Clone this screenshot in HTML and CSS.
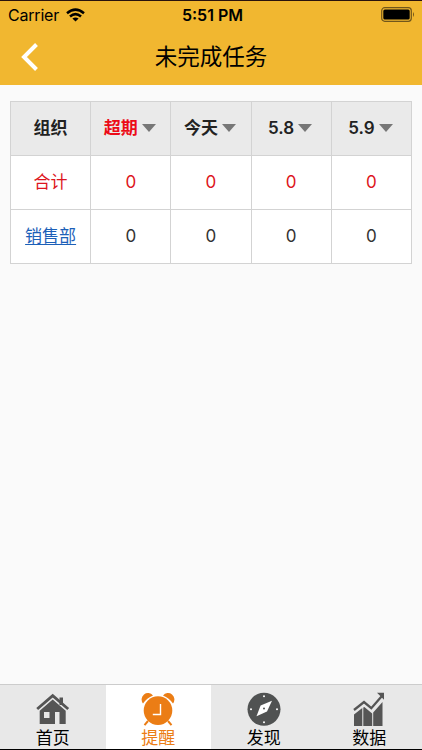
FILE: index.html
```html
<!DOCTYPE html>
<html lang="zh-CN">
<head>
    <meta charset="UTF-8">
    <meta name="viewport" content="width=device-width, initial-scale=1.0">
    <title>未完成任务</title>
    <link rel="stylesheet" href="styles.css">
</head>
<body>
    <!-- header -->
    <header class="header">
        <div class="status-bar">
            <div class="carrier">
                <span>Carrier</span>
                <svg class="wifi" width="19" height="14" viewBox="0 0 19 14">
                    <g fill="none" stroke="#000" stroke-width="2.5">
                        <path d="M1 5.2 Q9.5 -2 18 5.2"/>
                        <path d="M4 8.5 Q9.5 3.7 15 8.5"/>
                    </g>
                    <path d="M6.4 10.6 Q9.5 8.2 12.6 10.6 L9.5 13.6Z"/>
                </svg>
            </div>
            <div class="time">5:51 PM</div>
            <svg class="battery" width="34" height="15" viewBox="0 0 34 15">
                <rect x=".7" y=".7" width="29.6" height="13.6" rx="3" fill="none" stroke="#71561b" stroke-width="1.2"/>
                <rect x="2.3" y="2.4" width="26.4" height="10.2" rx="1.5"/>
                <path d="M32 5 Q34 7.5 32 10Z" fill="#71561b"/>
            </svg>
        </div>
        <div class="title-bar">
            <svg class="back" width="17" height="28" viewBox="0 0 17 28">
                <path d="M15.5 1.5 L3 14 L15.5 26.5" fill="none" stroke="#fff" stroke-width="4"/>
            </svg>
            <h1 class="title">未完成任务</h1>
        </div>
    </header>

    <!-- task table -->
    <main class="content">
        <table class="task-table">
            <thead>
                <tr>
                    <th>组织</th>
                    <th class="overdue">超期<span class="arrow"></span></th>
                    <th>今天<span class="arrow"></span></th>
                    <th>5.8<span class="arrow"></span></th>
                    <th>5.9<span class="arrow"></span></th>
                </tr>
            </thead>
            <tbody>
                <tr class="total">
                    <td>合计</td>
                    <td>0</td>
                    <td>0</td>
                    <td>0</td>
                    <td>0</td>
                </tr>
                <tr>
                    <td><a href="#">销售部</a></td>
                    <td>0</td>
                    <td>0</td>
                    <td>0</td>
                    <td>0</td>
                </tr>
            </tbody>
        </table>
    </main>

    <!-- bottom tabs -->
    <nav class="tabs">
        <a class="tab" href="#">
            <svg width="34" height="34" viewBox="0 0 34 34" fill="#555">
                <path d="M23.5 5.5 H27 V13 H23.5Z"/>
                <path d="M1.2 17 L16.7 3.6 L32.2 17" fill="none" stroke="#555" stroke-width="2.8"/>
                <path fill-rule="evenodd" d="M3.7 18.8 L16.7 7.4 L29.7 18.8 V32 H23.5 V20 H19 V32 H3.7Z M8 20 V26 H13.5 V20Z"/>
            </svg>
            <span>首页</span>
        </a>
        <a class="tab active" href="#">
            <svg width="34" height="34" viewBox="0 0 34 34" fill="#eb7d15">
                <path d="M2 11.4 A6.2 6.2 0 1 1 12 3.4 Q5.8 6 2 11.4Z"/>
                <path d="M32 11.4 A6.2 6.2 0 1 0 22 3.4 Q28.2 6 32 11.4Z"/>
                <circle cx="17" cy="18.6" r="14.3"/>
                <path d="M7 29 L3.5 33.2 M27 29 L30.5 33.2" stroke="#eb7d15" stroke-width="2"/>
                <path d="M19.5 12 V22.5 H11.8" fill="none" stroke="#fff" stroke-width="1.4"/>
            </svg>
            <span>提醒</span>
        </a>
        <a class="tab" href="#">
            <svg width="34" height="34" viewBox="0 0 34 34">
                <circle cx="17" cy="17.3" r="16.5" fill="#505252"/>
                <path d="M25 8.7 L20 19.6 L9.5 24.3 L13.6 13.4Z" fill="#fff"/>
                <g fill="#fff">
                    <circle cx="17" cy="4.3" r="1"/>
                    <circle cx="30" cy="17.3" r="1"/>
                    <circle cx="17" cy="30.3" r="1"/>
                    <circle cx="4" cy="17.3" r="1"/>
                </g>
                <circle cx="17" cy="16.6" r="1" fill="#505252"/>
            </svg>
            <span>发现</span>
        </a>
        <a class="tab" href="#">
            <svg width="34" height="34" viewBox="0 0 34 34" fill="#555">
                <path d="M2 22.5 L10.3 16 V34 H2Z M11.3 15.6 L12.3 15 L20.2 21.5 V34 H11.3Z M21.2 20.5 L30.5 10 V34 H21.2Z"/>
                <path d="M2 18 L12 10 L19.3 16.2 L29.5 4.5" fill="none" stroke="#555" stroke-width="2.3"/>
                <path d="M25 .8 H32 V7.8Z"/>
            </svg>
            <span>数据</span>
        </a>
    </nav>
</body>
</html>
```

FILE: styles.css
```css
* {
    box-sizing: border-box;
}
body {
    margin: 0;
    height: 750px;
    display: flex;
    flex-direction: column;
    background-color: #fafafa;
    border-top: 1px solid #29120c;
    border-bottom: 1px solid #000;
    font-family: Inter, "Noto Sans CJK SC", sans-serif;
    color: #000;
    overflow: hidden;
}

/* header */
.header {
    height: 84px;
    background-color: #f1b730;
}
.status-bar {
    display: grid;
    grid-template-columns: 1fr auto 1fr;
    align-items: center;
    height: 27px;
    padding: 0 7px 0 8px;
    font-size: 16px;
}
.carrier {
    display: flex;
    align-items: center;
    gap: 7px;
    letter-spacing: -0.2px;
}
.time {
    padding-left: 2px;
    font-weight: 600;
}
.battery {
    justify-self: end;
}
.title-bar {
    display: grid;
    grid-template-columns: 40px 1fr 40px;
    align-items: center;
    height: 57px;
    padding: 0 21px;
}
.title {
    margin: 0;
    font-size: 22.5px;
    font-weight: 400;
    line-height: 56px;
    text-align: center;
}

/* task table */
.content {
    flex: 1;
    padding: 16px 10px 0;
}
.task-table {
    width: 402px;
    table-layout: fixed;
    border-collapse: collapse;
    background-color: #fff;
    font-size: 17px;
    line-height: 24px;
    color: #333;
}
.task-table th,
.task-table td {
    height: 54px;
    padding: 0 0 2px;
    border: 1px solid #d3d3d3;
    text-align: center;
    white-space: nowrap;
}
.task-table th {
    background-color: #eaeaea;
    color: #222;
    font-weight: 600;
}
.task-table .overdue {
    color: #ec0c18;
}
.task-table .total {
    color: #dd1420;
}
.task-table a {
    color: #1c60b8;
    text-underline-offset: 2px;
}
.arrow {
    display: inline-block;
    margin: 0 2px 0 4px;
    border: 7px solid transparent;
    border-top: 8px solid #777;
    border-bottom: 0;
    vertical-align: 2px;
}

/* bottom tabs */
.tabs {
    display: grid;
    grid-template-columns: repeat(4, 1fr);
    height: 65px;
    border-top: 1px solid #ccc;
    background-color: #e8e8e8;
}
.tab {
    display: flex;
    flex-direction: column;
    align-items: center;
    padding: 7px 0 0;
    color: #000;
    font-size: 17px;
    line-height: 24px;
    text-decoration: none;
}
.tab.active {
    background-color: #fff;
    color: #eb7d15;
}
```
